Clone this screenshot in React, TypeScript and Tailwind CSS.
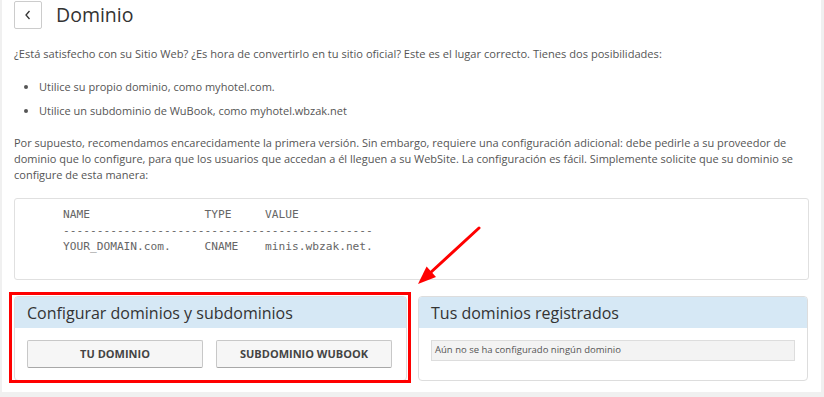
import React from "react";

const font = { fontFamily: '"Open Sans", "Noto Sans", sans-serif' };

export default function App() {
  return (
    <div
      className="w-[824px] h-[397px] bg-[#f0f0f0] pl-[2px] pr-[3px] pb-[5px] overflow-hidden"
      style={font}
    >
      <div className="relative h-full bg-white px-[12px] pt-[1px] text-[#555]">
        {/* Header */}
        <div className="flex items-center h-[28px]">
          <button className="w-[28px] h-[28px] border border-[#ccc] rounded-[2px] bg-white flex items-center justify-center text-[#333]">
            <svg width="10" height="12" viewBox="0 0 10 12">
              <path d="M6.5 2 L3 6 L6.5 10" fill="none" stroke="#333" strokeWidth="1.3" />
            </svg>
          </button>
          <h1 className="ml-[14px] text-[19.5px] leading-[28px] text-[#333]">Dominio</h1>
        </div>

        <p className="mt-[17px] text-[11.1px] leading-[16px]">
          ¿Está satisfecho con su Sitio Web? ¿Es hora de convertirlo en tu sitio oficial? Este es el lugar correcto. Tienes dos posibilidades:
        </p>

        <ul className="mt-[17px] pl-[25px] text-[11px] leading-[16px] list-disc flex flex-col gap-[8px]">
          <li>Utilice su propio dominio, como myhotel.com.</li>
          <li>Utilice un subdominio de WuBook, como myhotel.wbzak.net</li>
        </ul>

        <p className="mt-[16px] text-[11px] leading-[16px]">
          Por supuesto, recomendamos encarecidamente la primera versión. Sin embargo, requiere una configuración adicional: debe pedirle a su proveedor de dominio que lo configure, para que los usuarios que accedan a él lleguen a su WebSite. La configuración es fácil. Simplemente solicite que su dominio se configure de esta manera:
        </p>

        <pre
          className="mt-[15px] h-[82px] border border-[#e0e0e0] rounded-[3px] pl-[48px] pt-[8px] text-[11.2px] leading-[16px] text-[#666]"
          style={{ fontFamily: '"DejaVu Sans Mono", monospace' }}
        >
{`NAME                 TYPE     VALUE
----------------------------------------------
YOUR_DOMAIN.com.     CNAME    minis.wbzak.net.`}
        </pre>

        <div className="mt-[16px] grid grid-cols-[393px_390px] gap-[11px]">
          {/* Left panel */}
          <div className="relative">
            <div className="border border-[#ddd] rounded-[4px] overflow-hidden h-[85px]">
              <div className="bg-[#d6e8f5] h-[31px] px-[12px] flex items-center text-[16px] text-[#333]">
                Configurar dominios y subdominios
              </div>
              <div className="pt-[12px] px-[12px] flex gap-[13px]">
                <button className="w-[176px] h-[28px] border border-[#c8c8c8] border-b-[#a8a8a8] rounded-[2px] bg-[#f6f6f6] text-[11px] font-bold text-[#444]">
                  TU DOMINIO
                </button>
                <button className="w-[176px] h-[28px] border border-[#c8c8c8] border-b-[#a8a8a8] rounded-[2px] bg-[#f6f6f6] text-[11px] font-bold text-[#444]">
                  SUBDOMINIO WUBOOK
                </button>
              </div>
            </div>
            <div className="absolute left-[-5px] top-[-4px] right-[-4px] bottom-[-2px] border-[3px] border-[#ff0000]" />
          </div>

          {/* Right panel */}
          <div className="border border-[#ddd] rounded-[4px] overflow-hidden h-[85px]">
            <div className="bg-[#d6e8f5] h-[31px] px-[12px] flex items-center text-[16px] text-[#333]">
              Tus dominios registrados
            </div>
            <div className="pt-[12px] px-[12px]">
              <div className="h-[21px] bg-[#f3f3f3] border border-[#ddd] px-[3px] flex items-center text-[9.5px] text-[#555]">
                Aún no se ha configurado ningún dominio
              </div>
            </div>
          </div>
        </div>

        {/* Arrow annotation */}
        <svg className="absolute left-0 top-0 pointer-events-none" width="818" height="392">
          <line x1="477" y1="228" x2="427" y2="274" stroke="#ff0000" strokeWidth="3" strokeLinecap="round" />
          <polygon points="416,284 424.6,266.6 434,277" fill="#ff0000" />
        </svg>
      </div>
    </div>
  );
}
